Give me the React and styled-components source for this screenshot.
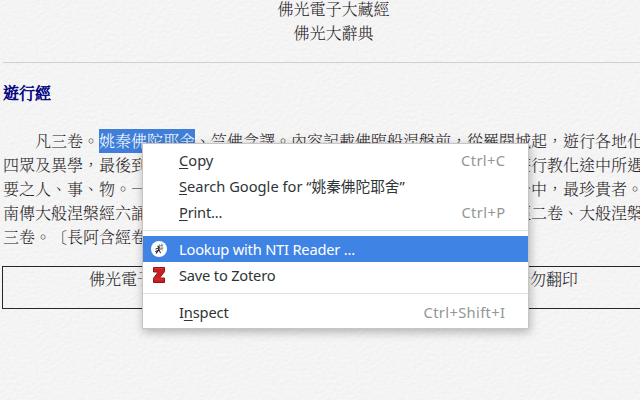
import React from "react";
import styled, { createGlobalStyle } from "styled-components";

const paper = `data:image/svg+xml,${encodeURIComponent(
  `<svg xmlns="http://www.w3.org/2000/svg" width="320" height="320"><filter id="p" x="0" y="0" width="100%" height="100%" color-interpolation-filters="sRGB"><feTurbulence type="fractalNoise" baseFrequency=".24 .34" numOctaves="3" seed="7" stitchTiles="stitch"/><feColorMatrix values="0 0 0 0 0  0 0 0 0 0  0 0 0 0 0  .9 0 0 0 0"/><feDiffuseLighting surfaceScale=".14" diffuseConstant="1.006" lighting-color="#fff"><feDistantLight azimuth="235" elevation="72"/></feDiffuseLighting></filter><rect width="320" height="320" filter="url(#p)"/></svg>`
)}`;

const GlobalStyle = createGlobalStyle`
  html, body { margin: 0; height: 100%; overflow: hidden; background: #f3f3f3; }
`;

const Page = styled.main`
  position: relative;
  box-sizing: border-box;
  width: 640px;
  height: 400px;
  overflow: hidden;
  padding-left: 3px;
  color: #1f2225;
  font: 300 16px/24px "Noto Serif CJK TC", "Noto Sans CJK TC", serif;
  text-spacing-trim: space-all;
  background: #f3f3f3 url("${paper}");
`;

const Document = styled.article`
  width: 661px;
  margin-top: -3px;
`;

const Masthead = styled.header`
  display: flex;
  flex-direction: column;
  align-items: center;
  height: 66px;
  box-sizing: border-box;
  border-bottom: 1px solid #cfd1cf;
`;

const Title = styled.h1`
  margin: 18px 0 24px;
  color: #000080;
  font-size: 16px;
  line-height: 24px;
  font-weight: 300;
  -webkit-text-stroke: 0.7px #000080;
`;

const Passage = styled.p`
  margin: 0;
`;

const Line = styled.span`
  display: block;
  height: 24px;
  white-space: pre;
`;

const Selected = styled.mark`
  display: inline-block;
  height: 24px;
  color: #fff;
  background: #3f7fd9;
`;

const Notice = styled.footer`
  box-sizing: border-box;
  width: 663px;
  height: 43px;
  margin: 17px 0 0 -1px;
  border: 1px solid #252728;
  text-align: center;
  white-space: pre;
  word-spacing: 5px;
`;

const Menu = styled.div`
  position: absolute;
  left: 142px;
  top: 143px;
  box-sizing: border-box;
  width: 387px;
  height: 186px;
  padding: 3px 0;
  border: 1px solid #c9c4bf;
  background: #fff;
  box-shadow: 1px 3px 9px rgba(0, 0, 0, 0.28);
  font: 400 14.67px/26px "Noto Sans", "Noto Sans CJK SC", sans-serif;
`;

const Item = styled.div`
  display: flex;
  align-items: center;
  height: 26px;
  padding-right: 23px;
  color: ${(p) => (p.$active ? "#fff" : "#2e3436")};
  background: ${(p) => (p.$active ? "#3f84e4" : "transparent")};
`;

const IconSlot = styled.span`
  display: flex;
  flex: none;
  width: 28px;
  padding-left: 8px;
`;

const Label = styled.span`
  flex: 1;
  white-space: pre;
  letter-spacing: ${(p) => p.$track || 0}px;
`;

const Key = styled.span`
  text-decoration: underline 1px;
  text-underline-offset: 2px;
  text-decoration-skip-ink: none;
`;

const Shortcut = styled.span`
  color: #929595;
  letter-spacing: 0.38px;
  margin-right: -0.4px;
`;

const Divider = styled.div`
  height: 1px;
  margin: 5px 0;
  background: #e2e2e2;
`;

const ReaderIcon = () => (
  <svg width="16" height="16" viewBox="0 0 16 16">
    <circle cx="8" cy="8" r="8" fill="#fff" />
    <g fill="none" stroke="#202020" strokeLinecap="round">
      <path d="M7 5.2 8.2 6.6 7.6 8.8 5.4 12" strokeWidth="1.3" />
      <path d="M4.8 8 8.4 6.6M8 8.8l1.4 3M4.6 10.4l2.8-1" strokeWidth="1" />
      <path d="M8.4 3.7l.8 5M10.8 3l.3 6.2M8.2 5l3.8-1M9.2 8l2.8-1" strokeWidth=".8" stroke="#777" />
    </g>
  </svg>
);

const ZoteroIcon = () => (
  <svg width="16" height="16" viewBox="0 0 16 16">
    <path d="M2.5.5h11v4.2L8.6 11h4.9v4.5h-11v-4.2L7.2 5H2.5z" fill="#c91f23" stroke="#941416" />
    <path d="M3.3 1.6h9.4M3.3 12h9.4" stroke="#dc3b3b" strokeWidth=".8" />
  </svg>
);

export default function App() {
  return (
    <>
      <GlobalStyle />
      <Page>
        <Document>
          <Masthead>
            <span>佛光電子大藏經</span>
            <span>佛光大辭典</span>
          </Masthead>
          <Title>遊行經</Title>
          <Passage>
            <Line>
              {"\u3000\u3000凡三卷。"}
              <Selected>姚秦佛陀耶舍</Selected>
              {"、竺佛念譯。內容記載佛臨般涅槃前\uff0c從羅閱城起\uff0c遊行各地化"}
            </Line>
            <Line>{"四眾及異學\uff0c最後到拘尸那揭羅城娑羅雙樹間入滅之經過\uff0c並敘述佛陀於遊行教化途中所遇"}</Line>
            <Line>{"要之人、事、物。一般認為本經乃研究佛陀晚年生活重要資料\uff0c諸經典之一中\uff0c最珍貴者。"}</Line>
            <Line>{"南傳大般涅槃經六誦品、佛般泥洹經二卷、般泥洹經二卷、又有方等泥洹經二卷、大般涅槃"}</Line>
            <Line>三卷。〔長阿含經卷二〕</Line>
          </Passage>
          <Notice>{"佛光電子大藏經 佛光山文教基金會版權所有\uff0c未經許可\uff0c敬請勿翻印"}</Notice>
        </Document>

        <Menu role="menu">
          <Item>
            <IconSlot />
            <Label><Key>C</Key>opy</Label>
            <Shortcut>Ctrl+C</Shortcut>
          </Item>
          <Item>
            <IconSlot />
            <Label><Key>S</Key>earch Google for “姚秦佛陀耶舍”</Label>
          </Item>
          <Item>
            <IconSlot />
            <Label $track={-0.2}><Key>P</Key>rint...</Label>
            <Shortcut>Ctrl+P</Shortcut>
          </Item>
          <Divider />
          <Item $active>
            <IconSlot><ReaderIcon /></IconSlot>
            <Label $track={-0.2}>Lookup with NTI Reader ...</Label>
          </Item>
          <Item>
            <IconSlot><ZoteroIcon /></IconSlot>
            <Label $track={-0.2}>Save to Zotero</Label>
          </Item>
          <Divider />
          <Item>
            <IconSlot />
            <Label $track={-0.15}>I<Key>n</Key>spect</Label>
            <Shortcut>Ctrl+Shift+I</Shortcut>
          </Item>
        </Menu>
      </Page>
    </>
  );
}
